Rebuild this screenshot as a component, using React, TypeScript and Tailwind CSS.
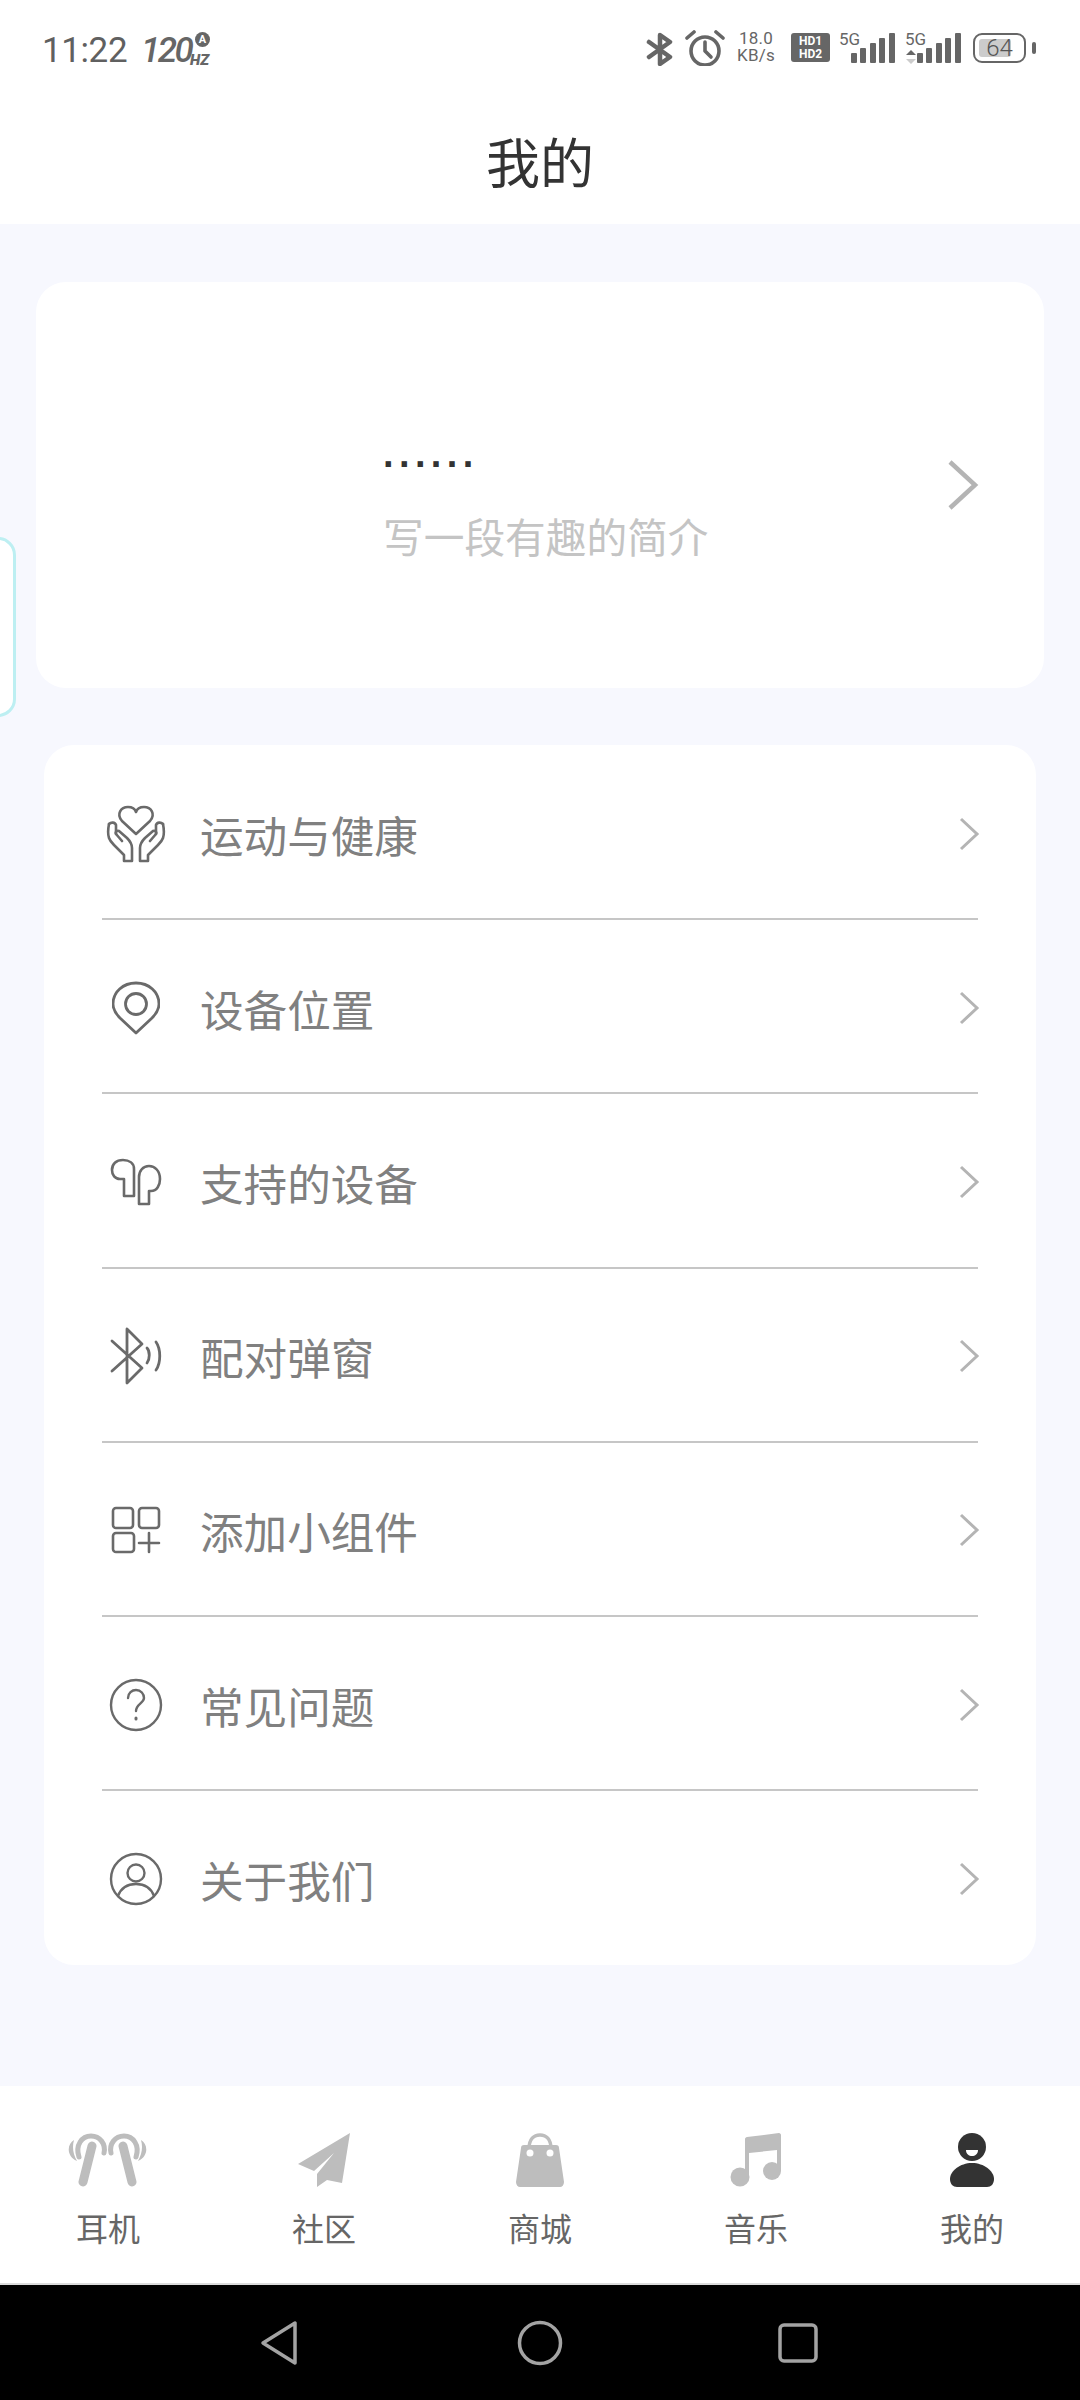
import type { ReactNode } from 'react';

const rows: { label: string; icon: ReactNode }[] = [
  {
    label: '运动与健康',
    icon: (
      <svg width="60" height="58" viewBox="0 0 60 58" fill="none" stroke="#6a6a6a" strokeWidth="2.6" strokeLinejoin="round" strokeLinecap="round">
        <path d="M30 29 L16 16 C10 9 15 2 22 2 C26 2 29 4 30 7 C31 4 34 2 38 2 C45 2 50 9 44 16 Z" />
        <path d="M3 19 C2 24 2 30 3 33 C4 36 6 38 8 40 L18 50 V56 H26 V43 C26 39 24 36 21 33 L13 26 C11 25 9 27 10 29 L16 36" />
        <path d="M10 29 V20 C9 17 5 17 3 19" />
        <path d="M57 19 C58 24 58 30 57 33 C56 36 54 38 52 40 L42 50 V56 H34 V43 C34 39 36 36 39 33 L47 26 C49 25 51 27 50 29 L44 36" />
        <path d="M50 29 V20 C51 17 55 17 57 19" />
      </svg>
    ),
  },
  {
    label: '设备位置',
    icon: (
      <svg width="48" height="54" viewBox="0 0 48 54" fill="none" stroke="#6a6a6a" strokeWidth="2.8" strokeLinejoin="round">
        <path d="M24 52 L8 37 C3 32 1 27 1 23 C1 11 11 2 24 2 C37 2 47 11 47 23 C47 27 45 32 40 37 Z" />
        <circle cx="24" cy="23" r="10.5" />
      </svg>
    ),
  },
  {
    label: '支持的设备',
    icon: (
      <svg width="52" height="48" viewBox="0 0 52 48" fill="none" stroke="#6a6a6a" strokeWidth="2.6" strokeLinejoin="round">
        <path d="M14 38 H24 V11 C24 5 19 2 13 2 C6 2 2 6 2 12 C2 17 5 21 10 21 H14 Z" />
        <path d="M29 46 H39 V33 H41 C47 33 50 27 50 21 C50 13 45 8 39 8 C33 8 29 13 29 19 Z" />
      </svg>
    ),
  },
  {
    label: '配对弹窗',
    icon: (
      <svg width="52" height="58" viewBox="0 0 52 58" fill="none" stroke="#6a6a6a" strokeWidth="2.8" strokeLinejoin="round" strokeLinecap="round">
        <path d="M2 14 L32 41 L17 56 V2 L32 17 L2 44" />
        <path d="M37 21 C40 24 40 32 37 36" />
        <path d="M46 15 C51 22 51 36 46 43" />
      </svg>
    ),
  },
  {
    label: '添加小组件',
    icon: (
      <svg width="50" height="48" viewBox="0 0 50 48" fill="none" stroke="#6a6a6a" strokeWidth="2.6" strokeLinecap="round">
        <rect x="2" y="2" width="20" height="20" rx="3" />
        <rect x="28" y="2" width="20" height="20" rx="3" />
        <rect x="2" y="27" width="21" height="19" rx="3" />
        <path d="M38 27 V46 M28 37 H48" />
      </svg>
    ),
  },
  {
    label: '常见问题',
    icon: (
      <svg width="54" height="54" viewBox="0 0 54 54" fill="none" stroke="#6a6a6a" strokeWidth="2.4" strokeLinecap="round">
        <circle cx="27" cy="27" r="25" />
        <path d="M19 20 C19 15 23 12 27 12 C32 12 35 16 35 20 C35 25 27 26 27 33" />
        <path d="M27 40 V41" strokeWidth="3" />
      </svg>
    ),
  },
  {
    label: '关于我们',
    icon: (
      <svg width="54" height="54" viewBox="0 0 54 54" fill="none" stroke="#6a6a6a" strokeWidth="2.4">
        <circle cx="27" cy="27" r="25" />
        <circle cx="27" cy="21" r="8.5" />
        <path d="M9 44 C12 36 19 32 27 32 C35 32 42 36 45 44" />
      </svg>
    ),
  },
];

const bud = (
  <>
    <path d="M24 13 L15 49" stroke="#bdbdbd" strokeWidth="9" strokeLinecap="round" />
    <path d="M11 24 C7 12 14 3 23 3 C32 3 38 11 36 20" fill="none" stroke="#bdbdbd" strokeWidth="5" strokeLinecap="round" />
    <path d="M6 7 C-1 11 -2 23 9 28 C5 21 4 14 6 7 Z" />
  </>
);

const tabs: { label: string; icon: ReactNode }[] = [
  {
    label: '耳机',
    icon: (
      <svg width="80" height="54" viewBox="0 0 80 54" fill="#bdbdbd">
        <g>{bud}</g>
        <g transform="matrix(-1 0 0 1 79 0)">{bud}</g>
      </svg>
    ),
  },
  {
    label: '社区',
    icon: (
      <svg width="54" height="54" viewBox="0 0 54 54" fill="#bdbdbd">
        <path d="M53 0 L1 31 L17 38 L37 20 L20 41 L20 54 L30 47 L45 50 Z" />
      </svg>
    ),
  },
  {
    label: '商城',
    icon: (
      <svg width="48" height="54" viewBox="0 0 48 54">
        <path d="M13 16 C13 6 18 2 24 2 C30 2 35 6 35 16" fill="none" stroke="#bdbdbd" strokeWidth="3.5" />
        <path d="M8 12 H40 C42 12 43 13 43 15 L48 49 C48 52 46 54 44 54 H4 C2 54 0 52 0 49 L5 15 C5 13 6 12 8 12 Z" fill="#bdbdbd" />
        <circle cx="14" cy="20" r="3.5" fill="#fff" />
        <circle cx="34" cy="20" r="3.5" fill="#fff" />
      </svg>
    ),
  },
  {
    label: '音乐',
    icon: (
      <svg width="52" height="54" viewBox="0 0 52 54" fill="#bdbdbd">
        <circle cx="10" cy="44" r="9.5" />
        <circle cx="42" cy="38" r="9" />
        <path d="M15 6 C15 5 16 4 17 4 L49 0 C50 0 51 1 51 2 V38 H47 V17 L19 20 V44 H15 Z" />
      </svg>
    ),
  },
  {
    label: '我的',
    icon: (
      <svg width="44" height="54" viewBox="0 0 44 54">
        <circle cx="22" cy="14" r="14" fill="#333" />
        <path d="M16 17 H28 C28 21 25 23 22 23 C19 23 16 21 16 17 Z" fill="#fff" />
        <path d="M22 30 C34 30 44 38 44 46 C44 51 41 54 37 54 H7 C3 54 0 51 0 46 C0 38 10 30 22 30 Z" fill="#333" />
      </svg>
    ),
  },
];

function Chevron({ big }: { big?: boolean }) {
  return big ? (
    <svg width="32" height="50" viewBox="0 0 32 50" fill="none" stroke="#b4b4b4" strokeWidth="4.5">
      <path d="M3 2 L28 25 L3 48" />
    </svg>
  ) : (
    <svg className="-mr-[2px]" width="22" height="34" viewBox="0 0 22 34" fill="none" stroke="#b4b4b4" strokeWidth="3">
      <path d="M3 2 L19 17 L3 32" />
    </svg>
  );
}

function Signal({ arrows }: { arrows?: boolean }) {
  return (
    <div className="relative w-[56px] h-[32px]">
      <span className="absolute left-0 top-[-3px] text-[17px] leading-[18px] text-[#666]">5G</span>
      {arrows && (
        <svg className="absolute left-[1px] top-[17px]" width="10" height="14" viewBox="0 0 10 14">
          <path d="M5 0 L10 5 H0 Z" fill="#666" />
          <path d="M5 14 L10 9 H0 Z" fill="#ccc" />
        </svg>
      )}
      <svg className="absolute right-0 top-0" width="44" height="30" viewBox="0 0 44 30" fill="#666">
        <rect x="0" y="20" width="6" height="10" rx="1" />
        <rect x="9" y="15" width="6" height="15" rx="1" />
        <rect x="19" y="10" width="6" height="20" rx="1" />
        <rect x="28" y="5" width="6" height="25" rx="1" />
        <rect x="38" y="0" width="6" height="30" rx="1" />
      </svg>
    </div>
  );
}

function StatusBar() {
  return (
    <div className="h-[90px] shrink-0 pl-[42px] pr-[44px] pt-[30px] flex justify-between items-start font-['Roboto',sans-serif] text-[#666]">
      <div className="flex items-start">
        <span className="w-[99px] text-[35px] leading-[42px] tracking-[-0.4px] text-[#606060]">11:22</span>
        <div className="relative w-[70px] h-[40px]">
          <span className="absolute left-0 top-[2px] text-[35px] leading-[38px] font-medium italic tracking-[-2.5px]">120</span>
          <span className="absolute left-[49px] top-[22px] text-[15px] leading-[16px] font-black italic">HZ</span>
          <span className="absolute left-[54px] top-[2px] w-[15px] h-[15px] rounded-full bg-[#666] text-white text-[11px] leading-[15px] font-bold text-center">A</span>
        </div>
      </div>
      <div className="flex items-start">
        <svg className="mt-[2px]" width="28" height="34" viewBox="0 0 28 34" fill="none" stroke="#666" strokeWidth="4.5" strokeLinejoin="round" strokeLinecap="round">
          <path d="M3 10 L24 25 L14 32 V3 L24 10 L3 25" />
        </svg>
        <svg className="ml-[11px]" width="40" height="36" viewBox="0 0 40 36" fill="none" stroke="#666" strokeWidth="3.6" strokeLinecap="round" strokeLinejoin="round">
          <circle cx="20" cy="21" r="14" />
          <path d="M20 12 V21 L26 27" />
          <path d="M2 8 L9 2 M38 8 L31 2" />
        </svg>
        <div className="ml-[11px] w-[40px] text-center text-[17px] leading-[17px] tracking-[0.2px]">
          <div>18.0</div>
          <div>KB/s</div>
        </div>
        <div className="ml-[15px] mt-[3px] w-[39px] h-[29px] rounded-[3px] bg-[#666] text-white text-[12px] leading-[13px] font-bold text-center pt-[2px]">
          <div>HD1</div>
          <div>HD2</div>
        </div>
        <div className="ml-[9px] mt-[3px]">
          <Signal />
        </div>
        <div className="ml-[10px] mt-[3px]">
          <Signal arrows />
        </div>
        <div className="ml-[12px] mt-[3px] relative w-[53px] h-[30px] rounded-[9px] border-[2.5px] border-[#666] flex items-center justify-center">
          <div className="absolute left-[4px] top-[4px] bottom-[4px] w-[32px] rounded-[3px] bg-[#ccc]" />
          <span className="relative text-[24px] leading-[24px] font-light text-[#555]">64</span>
        </div>
        <div className="ml-[6px] mt-[12px] w-[4px] h-[12px] rounded-[2px] bg-[#666]" />
      </div>
    </div>
  );
}

export default function App() {
  return (
    <div className="relative w-[1080px] h-[2400px] flex flex-col bg-white font-['Noto_Sans_CJK_SC',sans-serif]">
      <StatusBar />

      {/* Title */}
      <div className="h-[134px] shrink-0 flex items-center justify-center pt-[8px]">
        <h1 className="text-[54px] leading-[64px] text-[#333]">我的</h1>
      </div>

      <div className="flex-1 bg-[#f7f8fe] pt-[58px]">
        {/* Profile */}
        <div className="mx-[36px] h-[406px] rounded-[30px] bg-white flex items-center justify-between pl-[347px] pr-[65px]">
          <div className="pt-[29px]">
            <div className="text-[38px] leading-[40px] font-bold tracking-[5.4px] text-[#333] font-['Liberation_Sans',sans-serif]">......</div>
            <div className="mt-[32px] text-[40.7px] leading-[60px] text-[#c4c4c4]">写一段有趣的简介</div>
          </div>
          <Chevron big />
        </div>

        {/* Menu */}
        <div className="mt-[57px] mx-[44px] pt-[1px] pb-[2px] rounded-[30px] bg-white">
          {rows.map((row, i) => (
            <div key={row.label} className="mx-[58px]">
              <div className="h-[172.2px] pt-[3px] flex items-center">
                <div className="w-[68px] flex justify-center">{row.icon}</div>
                <span className="ml-[30px] flex-1 text-[43.6px] leading-[60px] text-[#808080]">{row.label}</span>
                <Chevron />
              </div>
              {i < rows.length - 1 && <div className="h-[2px] bg-[#c6c6c6]" />}
            </div>
          ))}
        </div>
      </div>

      {/* Tabs */}
      <div className="h-[197px] shrink-0 grid grid-cols-5 pt-[47px] bg-white">
        {tabs.map((tab) => (
          <div key={tab.label} className="flex flex-col items-center">
            <div className="h-[54px] flex items-center">{tab.icon}</div>
            <span className="mt-[18px] text-[32px] leading-[44px] text-[#666]">{tab.label}</span>
          </div>
        ))}
      </div>

      {/* System nav */}
      <div className="h-[117px] shrink-0 bg-black border-t-2 border-[#dcdcdc] flex items-center justify-center pr-[3px]">
        <svg className="mr-[219px]" width="38" height="46" viewBox="0 0 38 46" fill="none" stroke="#a3a3a3" strokeWidth="3.5" strokeLinejoin="round">
          <path d="M35 3 V43 L3 23 Z" />
        </svg>
        <svg width="46" height="46" viewBox="0 0 46 46" fill="none" stroke="#a3a3a3" strokeWidth="3.5">
          <circle cx="23" cy="23" r="20.5" />
        </svg>
        <svg className="ml-[215px]" width="40" height="40" viewBox="0 0 40 40" fill="none" stroke="#a3a3a3" strokeWidth="3.5">
          <rect x="2" y="2" width="36" height="36" rx="4" />
        </svg>
      </div>

      {/* Floating edge handle */}
      <div className="absolute left-[-20px] top-[537px] w-[36px] h-[180px] rounded-[18px] border-[3px] border-[#bdeff2] bg-white" />
    </div>
  );
}
